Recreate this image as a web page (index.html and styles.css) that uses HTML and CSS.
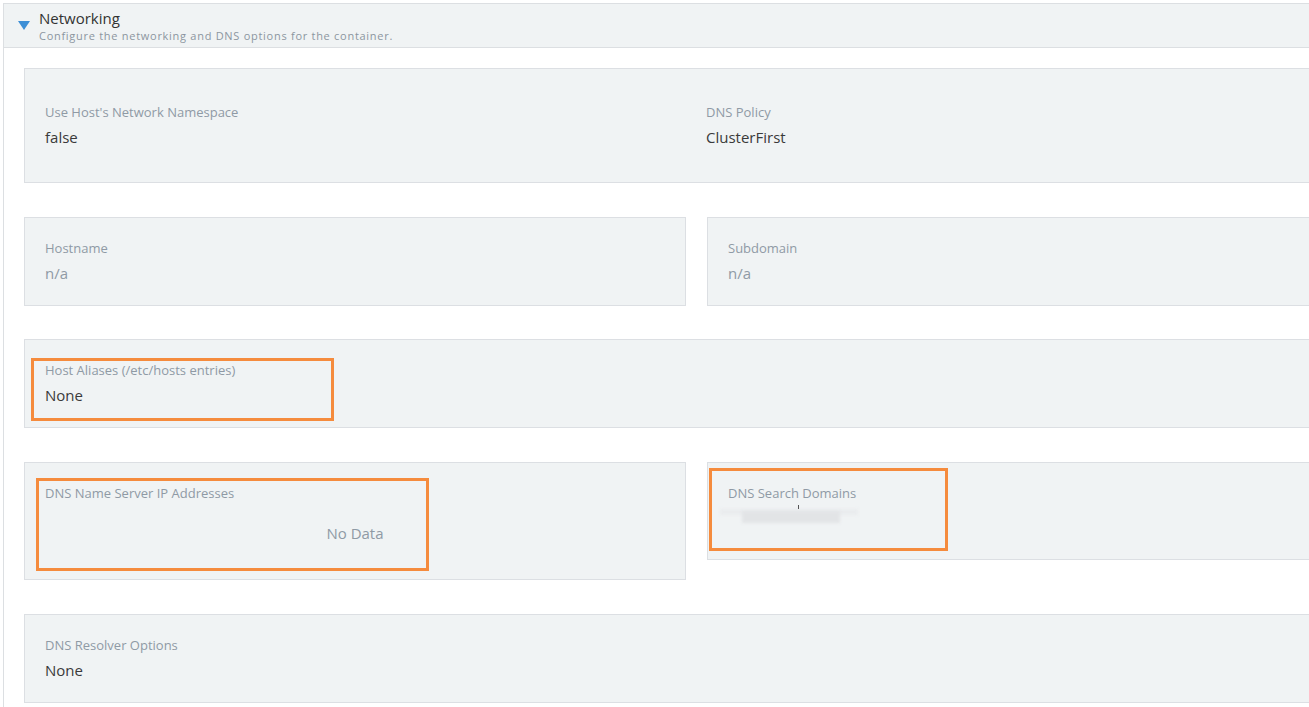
FILE: index.html
```html
<!DOCTYPE html>
<html lang="en">
<head>
  <meta charset="UTF-8" />
  <meta name="viewport" content="width=device-width, initial-scale=1.0"/>
  <title>Networking</title>
  <link rel="stylesheet" href="styles.css">
</head>
<body>
  <div class="accordion">
    <div class="acc-header">
      <span class="caret"></span>
      <div>
        <div class="acc-title">Networking</div>
        <div class="acc-sub">Configure the networking and DNS options for the container.</div>
      </div>
    </div>

    <div class="acc-body">
      <div class="box box-lg">
        <div class="row">
          <div class="field">
            <div class="label">Use Host's Network Namespace</div>
            <div class="value">false</div>
          </div>
          <div class="field">
            <div class="label">DNS Policy</div>
            <div class="value">ClusterFirst</div>
          </div>
        </div>
      </div>

      <div class="cols cols-first">
        <div class="box">
          <div class="label">Hostname</div>
          <div class="value muted">n/a</div>
        </div>
        <div class="box">
          <div class="label">Subdomain</div>
          <div class="value muted">n/a</div>
        </div>
      </div>

      <div class="box">
        <div class="mark mark-aliases"></div>
        <div class="label">Host Aliases (/etc/hosts entries)</div>
        <div class="value">None</div>
      </div>

      <div class="cols cols-top">
        <div class="box box-tall">
          <div class="mark mark-ns"></div>
          <div class="label">DNS Name Server IP Addresses</div>
          <div class="no-data">No Data</div>
        </div>
        <div class="box box-mid">
          <div class="mark mark-search"></div>
          <div class="label">DNS Search Domains</div>
          <div class="redacted">
            <span class="blur blur-a"></span>
            <span class="blur blur-b"></span>
            <span class="tick"></span>
          </div>
        </div>
      </div>

      <div class="box">
        <div class="label">DNS Resolver Options</div>
        <div class="value">None</div>
      </div>
    </div>
  </div>
</body>
</html>
```

FILE: styles.css
```css
body {
  margin: 0;
  font-family: 'Open Sans', Lato, sans-serif;
  background: #fff;
  color: #333;
  overflow: hidden;
}

.accordion {
  margin: 3px 0 0 3px;
  width: 1400px;
  border-left: 1px solid #dcdfe2;
  min-height: 720px;
}

.acc-header {
  display: flex;
  align-items: flex-start;
  height: 43px;
  background: #f0f3f4;
  border-top: 1px solid #dcdfe2;
  border-bottom: 1px solid #dcdfe2;
}

.caret {
  width: 0;
  height: 0;
  margin: 17px 9px 0 14px;
  border-left: 6px solid transparent;
  border-right: 6px solid transparent;
  border-top: 9px solid #3d8fd6;
}

.acc-title {
  margin-top: 4px;
  font-size: 15px;
  line-height: 20px;
  color: #333;
}

.acc-sub {
  font-size: 11px;
  line-height: 15px;
  letter-spacing: 0.72px;
  color: #8c96a0;
}

.acc-body {
  width: 1360px;
  padding: 20px 20px 0 20px;
  display: flex;
  flex-direction: column;
  gap: 34px;
}

.box {
  position: relative;
  background: #f0f3f4;
  border: 1px solid #dcdfe3;
  padding: 20px 20px 21px;
}

.box-lg {
  padding: 33px 20px 34px;
}

.row {
  display: flex;
}

.row .field {
  flex: 0 0 661px;
}

.cols {
  display: grid;
  grid-template-columns: 662px 1fr;
  gap: 21px;
}

.cols-first {
  margin-bottom: -1px;
}

.cols-top {
  align-items: start;
}

.label {
  font-size: 13px;
  line-height: 20px;
  color: #8f9aa5;
}

.value {
  margin-top: 4px;
  font-size: 15px;
  line-height: 22px;
  color: #3a3a3a;
}

.value.muted {
  color: #8f9aa5;
}

.box-tall {
  height: 75px;
}

.box-mid {
  height: 55px;
}

.no-data {
  margin-top: 19px;
  text-align: center;
  font-size: 15px;
  line-height: 22px;
  color: #8f9aa5;
}

.redacted {
  position: relative;
  height: 26px;
  margin-top: 2px;
  margin-left: -8px;
}

.blur {
  position: absolute;
  background: #e2e4e6;
  filter: blur(1.5px);
}

.blur-a {
  left: 0;
  top: 4px;
  width: 138px;
  height: 6px;
  background: #eaecee;
}

.blur-b {
  left: 22px;
  top: 6px;
  width: 98px;
  height: 12px;
}

.tick {
  position: absolute;
  left: 78px;
  top: 0;
  width: 1px;
  height: 4px;
  background: #555;
}

.mark {
  position: absolute;
  border: 3px solid #f58b3d;
  pointer-events: none;
}

.mark-aliases {
  left: 6px;
  top: 18px;
  width: 297px;
  height: 57px;
}

.mark-ns {
  left: 11px;
  top: 15px;
  width: 387px;
  height: 87px;
}

.mark-search {
  left: 1px;
  top: 5px;
  width: 233px;
  height: 77px;
}
```
